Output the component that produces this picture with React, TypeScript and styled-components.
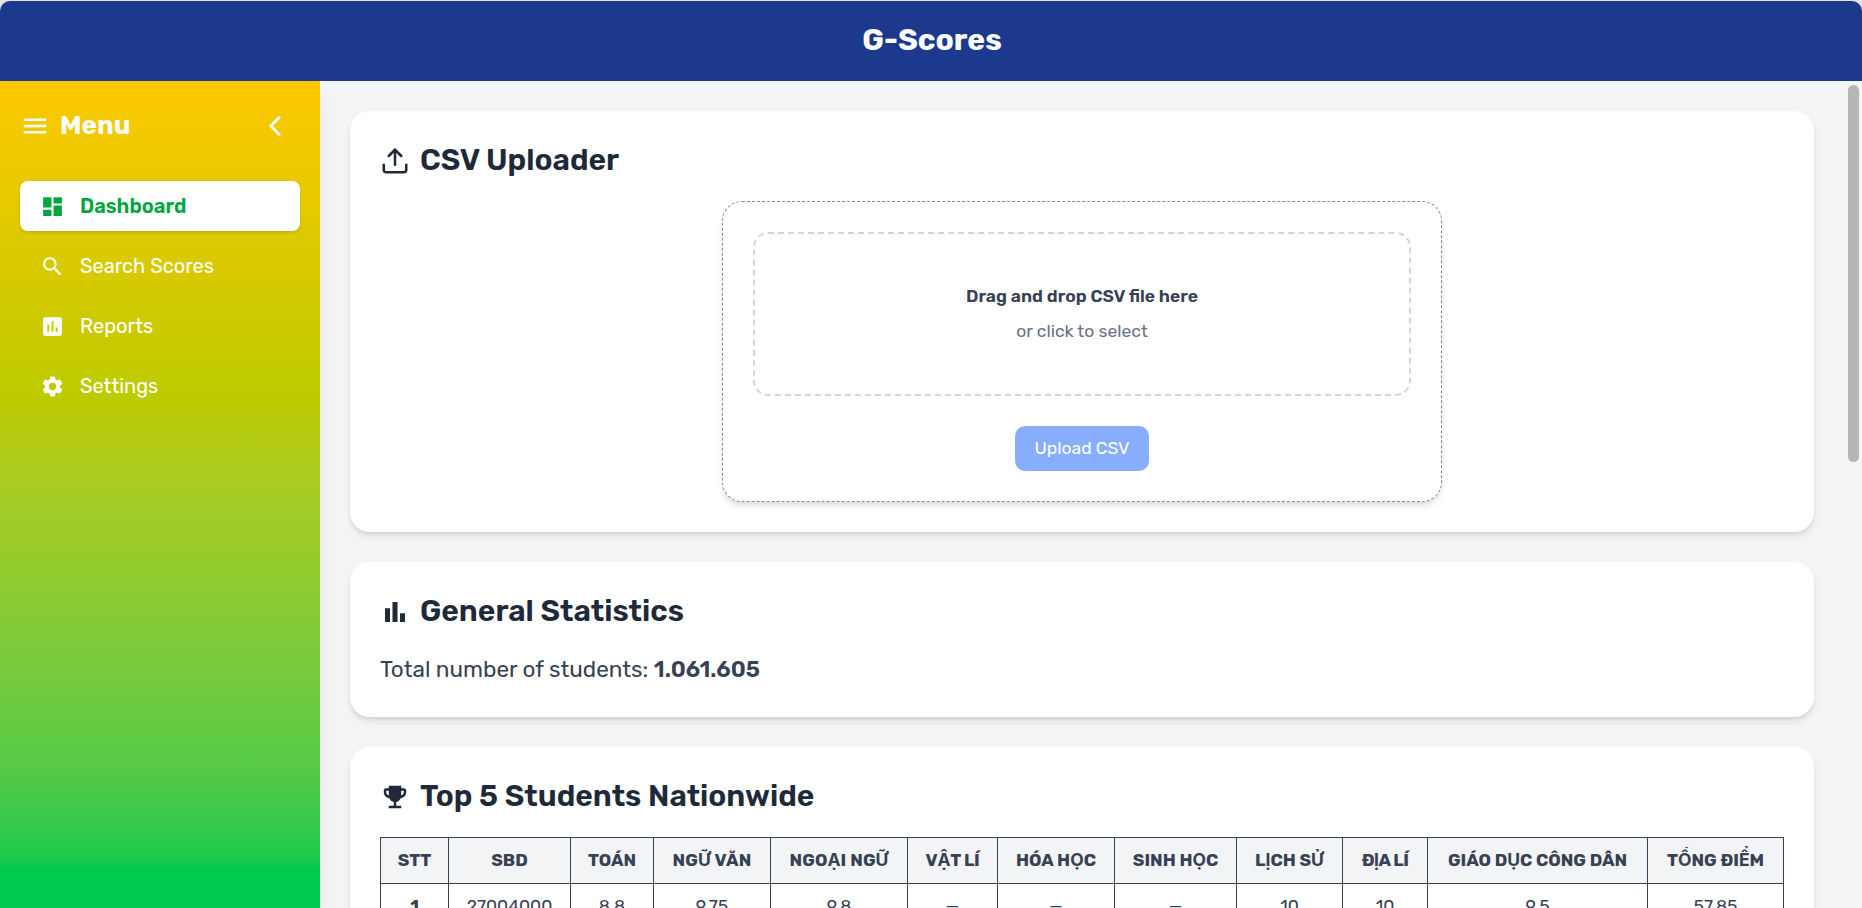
import React from 'react';
import styled, { createGlobalStyle, css } from 'styled-components';
import {
  MdAssessment,
  MdBarChart,
  MdDashboard,
  MdEmojiEvents,
  MdMenu,
  MdSearch,
  MdSettings,
} from 'react-icons/md';
import { IoChevronBack } from 'react-icons/io5';
import { FiUpload } from 'react-icons/fi';

const GlobalStyle = createGlobalStyle`
  *, *::before, *::after { box-sizing: border-box; }
  html { font-size: 20px; }
  body {
    margin: 0;
    background: #e2e4ea;
    font-family: Rubik, Inter, 'Liberation Sans', sans-serif;
    line-height: 1.5;
    overflow: hidden;
  }
  h1, h2, p { margin: 0; }
`;

const cardShadow = css`
  box-shadow: 0 5px 7.5px -1.25px rgba(0, 0, 0, 0.1), 0 2.5px 5px -2.5px rgba(0, 0, 0, 0.1);
`;

const Shell = styled.div`
  display: flex;
  flex-direction: column;
  height: 100vh;
  padding-top: 1px;
  overflow: hidden;
`;

const TopBar = styled.header`
  flex: none;
  display: flex;
  align-items: center;
  justify-content: center;
  height: 80px;
  padding-left: 2px;
  background: #1c398e;
  border-radius: 10px 10px 0 0;
`;

const Brand = styled.h1`
  color: #fff;
  font-size: 30px;
  font-weight: 700;
  line-height: 40px;
  padding-bottom: 3px;
`;

const Body = styled.div`
  flex: 1;
  display: flex;
  min-height: 0;
  background: #f3f4f6;
`;

const Sidebar = styled.aside`
  flex: none;
  width: 320px;
  padding: 20px;
  color: #fff;
  background: linear-gradient(
    to bottom in oklab,
    oklch(85.2% 0.199 91.936) 0%,
    oklch(72.3% 0.219 149.579) 100%
  );
  box-shadow: 0 12.5px 18.75px -3.75px rgba(0, 0, 0, 0.1), 0 5px 7.5px -5px rgba(0, 0, 0, 0.1);
`;

const MenuHead = styled.div`
  display: flex;
  align-items: center;
  justify-content: space-between;
  height: 50px;
  margin-bottom: 30px;
`;

const MenuTitle = styled.div`
  display: flex;
  align-items: center;
  gap: 10px;
  font-size: 26px;
  font-weight: 700;
  line-height: 35px;
`;

const CollapseButton = styled.button`
  display: flex;
  padding: 10px;
  border: 0;
  background: none;
  color: inherit;
`;

const Nav = styled.nav`
  display: flex;
  flex-direction: column;
  gap: 10px;
`;

const NavItem = styled.a<{ $active?: boolean }>`
  display: flex;
  align-items: center;
  gap: 15px;
  height: 50px;
  padding: 0 20px;
  border-radius: 7.5px;
  font-size: 20px;
  color: #fff;
  ${({ $active }) =>
    $active &&
    css`
      background: #fff;
      color: #00a63e;
      font-weight: 600;
      box-shadow: 0 1.25px 3.75px rgba(0, 0, 0, 0.1), 0 1.25px 2.5px -1.25px rgba(0, 0, 0, 0.1);
    `}
`;

const Main = styled.main`
  flex: 1;
  min-width: 0;
  display: flex;
  flex-direction: column;
  gap: 30px;
  padding: 30px;
  overflow: hidden;
`;

const Card = styled.section`
  flex: none;
  padding: 30px;
  background: #fff;
  border-radius: 20px;
  color: #364153;
  ${cardShadow}
`;

const CardTitle = styled.h2`
  display: flex;
  align-items: center;
  gap: 10px;
  height: 40px;
  margin-bottom: 20px;
  color: #1e2939;
  font-size: 30px;
  font-weight: 600;
  line-height: 40px;
`;

const TitleText = styled.span`
  padding-bottom: 2px;
`;

const UploadPanel = styled.div`
  display: flex;
  flex-direction: column;
  align-items: center;
  gap: 30px;
  width: 720px;
  margin: 0 auto;
  padding: 30px;
  border: 1px dashed #858d9b;
  border-radius: 20px;
  ${cardShadow}
  font-size: 17.5px;
  line-height: 25px;
`;

const DropZone = styled.div`
  display: flex;
  flex-direction: column;
  align-items: center;
  gap: 10px;
  width: 100%;
  padding: 50px;
  border: 2px dashed #d1d5dc;
  border-radius: 15px;
`;

const DropTitle = styled.p`
  font-weight: 600;
`;

const DropHint = styled.p`
  color: #6a7282;
`;

const UploadButton = styled.button`
  padding: 10px 20px;
  border: 0;
  border-radius: 10px;
  background: #155dfc;
  color: #fff;
  font: inherit;
  opacity: 0.5;
`;

const Total = styled.p`
  font-size: 22.5px;
  line-height: 35px;
`;

const Strong = styled.span`
  font-weight: 600;
`;

const Table = styled.table`
  width: 1404px;
  table-layout: fixed;
  border-collapse: collapse;
  font-size: 17.5px;
  line-height: 25px;
  text-align: center;
`;

const Th = styled.th<{ $track?: number }>`
  padding: 10px 0;
  border: 1px solid #364153;
  background: #f3f4f6;
  font-weight: 700;
  white-space: nowrap;
  letter-spacing: ${({ $track }) => $track ?? 0}px;
`;

const Td = styled.td<{ $bold?: boolean }>`
  padding: 10px 0;
  border: 1px solid #364153;
  font-weight: ${({ $bold }) => ($bold ? 700 : 400)};
`;

const ScrollTrack = styled.div`
  flex: none;
  width: 18px;
  padding: 4px 3px 4px 4px;
  background: #f5f5f5;
`;

const ScrollThumb = styled.div`
  height: 377px;
  border-radius: 6px;
  background: #b6b6b6;
`;

const columns: { label: string; width: number; value: string; track?: number }[] = [
  { label: 'STT', width: 68, value: '1' },
  { label: 'SBD', width: 122, value: '27004000' },
  { label: 'TOÁN', width: 83, value: '8.8' },
  { label: 'NGỮ VĂN', width: 117, value: '9.75', track: 0.2 },
  { label: 'NGOẠI NGỮ', width: 137, value: '9.8', track: 0.1 },
  { label: 'VẬT LÍ', width: 90, value: '—', track: -0.3 },
  { label: 'HÓA HỌC', width: 117, value: '—' },
  { label: 'SINH HỌC', width: 122, value: '—' },
  { label: 'LỊCH SỬ', width: 106, value: '10' },
  { label: 'ĐỊA LÍ', width: 85, value: '10', track: -0.5 },
  { label: 'GIÁO DỤC CÔNG DÂN', width: 220, value: '9.5' },
  { label: 'TỔNG ĐIỂM', width: 136, value: '57.85' },
];

export default function App() {
  return (
    <>
      <GlobalStyle />
      <Shell>
        <TopBar>
          <Brand>G-Scores</Brand>
        </TopBar>
        <Body>
          <Sidebar>
            <MenuHead>
              <MenuTitle>
                <MdMenu size={30} />
                <TitleText>Menu</TitleText>
              </MenuTitle>
              <CollapseButton aria-label="Collapse menu">
                <IoChevronBack size={30} />
              </CollapseButton>
            </MenuHead>
            <Nav>
              <NavItem $active>
                <MdDashboard size={25} />
                Dashboard
              </NavItem>
              <NavItem>
                <MdSearch size={25} />
                Search Scores
              </NavItem>
              <NavItem>
                <MdAssessment size={25} />
                Reports
              </NavItem>
              <NavItem>
                <MdSettings size={25} />
                Settings
              </NavItem>
            </Nav>
          </Sidebar>
          <Main>
            <Card>
              <CardTitle>
                <FiUpload size={30} />
                <TitleText>CSV Uploader</TitleText>
              </CardTitle>
              <UploadPanel>
                <DropZone>
                  <DropTitle>Drag and drop CSV file here</DropTitle>
                  <DropHint>or click to select</DropHint>
                </DropZone>
                <UploadButton disabled>Upload CSV</UploadButton>
              </UploadPanel>
            </Card>
            <Card>
              <CardTitle>
                <MdBarChart size={30} />
                <TitleText>General Statistics</TitleText>
              </CardTitle>
              <Total>
                Total number of students: <Strong>1.061.605</Strong>
              </Total>
            </Card>
            <Card>
              <CardTitle>
                <MdEmojiEvents size={30} />
                <TitleText>Top 5 Students Nationwide</TitleText>
              </CardTitle>
              <Table>
                <colgroup>
                  {columns.map((c) => (
                    <col key={c.label} width={c.width} />
                  ))}
                </colgroup>
                <thead>
                  <tr>
                    {columns.map((c) => (
                      <Th key={c.label} $track={c.track}>
                        {c.label}
                      </Th>
                    ))}
                  </tr>
                </thead>
                <tbody>
                  <tr>
                    {columns.map((c, i) => (
                      <Td key={c.label} $bold={i === 0}>
                        {c.value}
                      </Td>
                    ))}
                  </tr>
                </tbody>
              </Table>
            </Card>
          </Main>
          <ScrollTrack>
            <ScrollThumb />
          </ScrollTrack>
        </Body>
      </Shell>
    </>
  );
}
